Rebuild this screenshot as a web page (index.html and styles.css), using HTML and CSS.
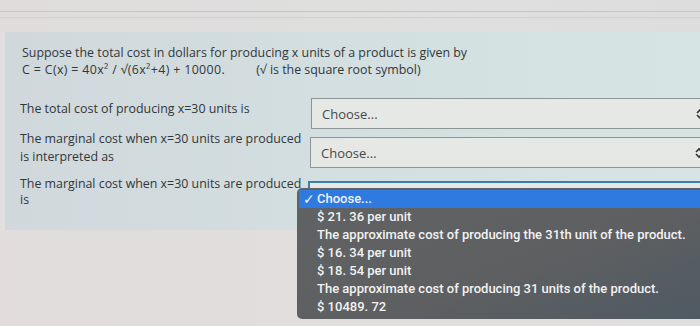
FILE: index.html
```html
<!DOCTYPE html>
<html>
<head>
<meta charset="utf-8">
<link rel="stylesheet" href="styles.css">
</head>
<body>
<div class="page">
  <div class="top">
    <div class="line line-a"></div>
    <div class="line line-b"></div>
  </div>
  <div class="panel">
    <p class="intro">Suppose the total cost in dollars for producing x units of a product is given by<br><span class="formula">C = C(x) = 40x² / √(6x²+4) + 10000.</span> <span class="note">(√ is the square root symbol)</span></p>
    <div class="row row-1">
      <div class="label">The total cost of producing x=30 units is</div>
      <div class="select"><span>Choose...</span><svg class="arrows" width="8" height="12" viewBox="0 0 8 12"><path d="M1 5 L4 2 L7 5 M1 7 L4 10 L7 7" fill="none" stroke="#333" stroke-width="1.6"/></svg></div>
    </div>
    <div class="row row-2">
      <div class="label">The marginal cost when x=30 units are produced<br>is interpreted as</div>
      <div class="select"><span>Choose...</span><svg class="arrows" width="8" height="12" viewBox="0 0 8 12"><path d="M1 5 L4 2 L7 5 M1 7 L4 10 L7 7" fill="none" stroke="#333" stroke-width="1.6"/></svg></div>
    </div>
    <div class="row row-3">
      <div class="label">The marginal cost when x=30 units are produced<br>is</div>
      <div class="select focused"></div>
    </div>
  </div>
  <div class="bottom"></div>
  <ul class="menu">
    <li class="item selected"><span class="check">✓</span>Choose...</li>
    <li class="item">$ 21. 36 per unit</li>
    <li class="item">The approximate cost of producing the 31th unit of the product.</li>
    <li class="item">$ 16. 34 per unit</li>
    <li class="item">$ 18. 54 per unit</li>
    <li class="item">The approximate cost of producing 31 units of the product.</li>
    <li class="item">$ 10489. 72</li>
  </ul>
</div>
</body>
</html>
```
FILE: styles.css
```css
html, body {
  margin: 0;
  padding: 0;
  width: 700px;
  height: 326px;
  overflow: hidden;
  background: #e1dfdf;
}
.page {
  position: relative;
  width: 700px;
  height: 326px;
  font-family: "Open Sans", "Liberation Sans", sans-serif;
  color: #33373a;
}
.top {
  height: 32px;
  background: linear-gradient(90deg, #e0dcdc, #dedfde 60%, #dcdddc);
  display: flex;
  flex-direction: column;
}
.line {
  height: 1px;
  background: #c4c6c6;
}
.line-a {
  margin-top: 11px;
}
.line-b {
  margin-top: 5px;
  background: #d0d2d2;
}
.panel {
  margin-left: 5px;
  height: 198px;
  background: linear-gradient(90deg, #d0d8dc, #d3dfe0 50%, #d6e5e3);
  padding: 12px 0 0 17px;
  box-sizing: border-box;
  overflow: hidden;
}
.intro {
  margin: 0;
  font-size: 12.4px;
  line-height: 17px;
}
.formula {
  letter-spacing: 0.35px;
}
.note {
  margin-left: 28px;
}
.row {
  display: flex;
  align-items: flex-start;
  font-size: 12.4px;
  margin-left: -2px;
}
.label {
  width: 291px;
  line-height: 18px;
  flex: none;
  white-space: nowrap;
}
.row-1 {
  margin-top: 20px;
}
.row-1 .label {
  padding-top: 2px;
}
.row-2 {
  margin-top: 1px;
}
.row-2 .select {
  margin-top: 7px;
  margin-left: -1px;
}
.row-3 {
  margin-top: 8px;
}
.row-3 .label {
  line-height: 16px;
}
.row-3 .select {
  margin-top: 5px;
  margin-left: -3px;
}
.select {
  flex: none;
  width: 400px;
  height: 31px;
  box-sizing: border-box;
  border: 1px solid #8f9496;
  background: #e6e8e6;
  display: flex;
  align-items: center;
  padding-left: 10px;
  color: #45484a;
  font-size: 13px;
  position: relative;
}
.arrows {
  position: absolute;
  left: 384px;
  top: 9px;
}
.focused {
  border: 2px solid #3b7fa8;
  border-bottom: none;
  background: #e4e8e8;
}
.bottom {
  height: 96px;
  background: linear-gradient(90deg, #e2dcdc, #dfdfde);
}
.menu {
  position: absolute;
  left: 297px;
  top: 188px;
  width: 410px;
  height: 131px;
  margin: 0;
  padding: 2px 0 0 0;
  box-sizing: border-box;
  list-style: none;
  background: linear-gradient(160deg, #616264, #5d5f61 60%, #4e5a63);
  border-radius: 5px;
  font-family: "Roboto", "Liberation Sans", sans-serif;
  font-weight: 500;
  font-size: 13px;
  color: #f2f2f2;
}
.item {
  height: 18px;
  line-height: 18px;
  padding-left: 20px;
  position: relative;
  white-space: nowrap;
}
.selected {
  background: #2e7ae0;
  margin-left: 2px;
  padding-left: 18px;
}
.check {
  position: absolute;
  left: 4px;
  top: 0;
  font-family: "DejaVu Sans", sans-serif;
  font-size: 14px;
  font-weight: bold;
}
```
